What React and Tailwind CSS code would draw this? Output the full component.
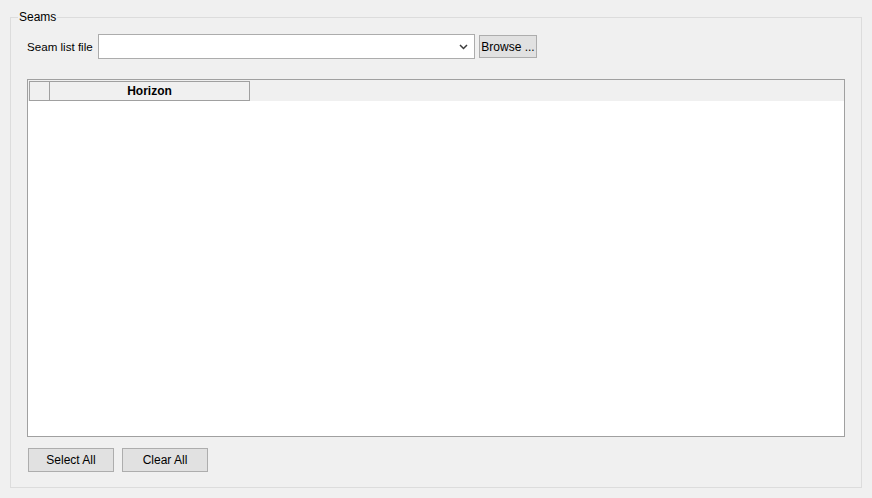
import React from "react";

const ui = { fontFamily: '"Liberation Sans", Arial, sans-serif' };

function WinButton({ children, className = "" }) {
  return (
    <button
      className={`border border-[#adadad] bg-[#e1e1e1] text-[12px] leading-none text-black ${className}`}
      style={ui}
    >
      {children}
    </button>
  );
}

export default function App() {
  return (
    <div className="w-[872px] h-[498px] bg-[#f0f0f0] pl-[10px] pt-[9px] text-black" style={ui}>
      <fieldset className="w-[852px] h-[479px] border border-[#dcdcdc] pb-0">
        <legend className="ml-[7px] px-[1px] text-[12px] leading-[16px]">Seams</legend>

        {/* file row */}
        <div className="mt-[9px] ml-[16px] flex items-center">
          <span className="w-[67px] whitespace-nowrap text-[11.6px] leading-[16px]">Seam list file</span>
          <div className="ml-[4px] w-[377px] h-[25px] bg-white border border-[#acacac] flex items-center justify-end pr-[6px]">
            <svg width="9" height="6" viewBox="0 0 9 6">
              <path d="M1 1 L4.5 4.5 L8 1" fill="none" stroke="#3c3c3c" strokeWidth="1.5" />
            </svg>
          </div>
          <WinButton className="ml-[4px] w-[58px] h-[23px]">Browse ...</WinButton>
        </div>

        {/* grid */}
        <div className="mt-[20px] ml-[16px] w-[818px] h-[358px] border border-[#a0a0a0] bg-white flex flex-col">
          <div className="h-[21px] bg-[#f0f0f0] pt-[1px] pl-[1px] flex">
            <div className="w-[21px] h-[20px] border border-[#a0a0a0]" />
            <div className="w-[200px] h-[20px] border border-[#a0a0a0] border-l-0 flex items-center justify-center text-[12px] font-bold">
              Horizon
            </div>
          </div>
          <div className="flex-1" />
        </div>

        {/* buttons */}
        <div className="mt-[11px] ml-[17px] flex gap-[8px]">
          <WinButton className="w-[86px] h-[24px]">Select All</WinButton>
          <WinButton className="w-[86px] h-[24px]">Clear All</WinButton>
        </div>
      </fieldset>
    </div>
  );
}
